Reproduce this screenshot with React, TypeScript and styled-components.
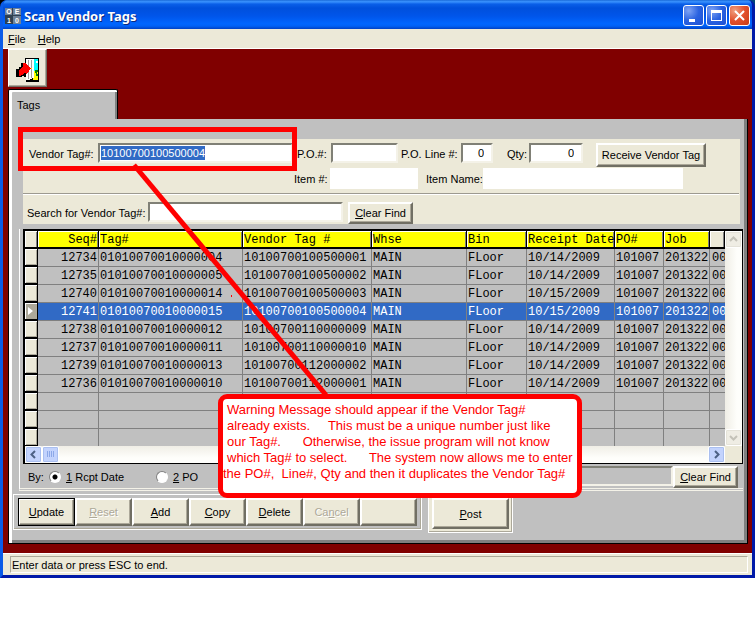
import React from "react";
import styled, { createGlobalStyle, css } from "styled-components";

const GlobalStyle = createGlobalStyle`
  * { box-sizing: border-box; }
  body { margin: 0; background: #fff; }
  button, input { font: inherit; color: inherit; margin: 0; border-radius: 0; }
`;

const beige = "#ece9d8";
const silver = "#c0c0c0";
const maroon = "#800000";

const raised = css`
  border: 2px solid;
  border-color: #fff #716f64 #716f64 #fff;
  box-shadow: inset -1px -1px 0 #aca899;
`;
const sunken = css`
  border: 2px solid;
  border-color: #808076 #f4f2e8 #f4f2e8 #808076;
`;

const Desktop = styled.div`
  position: relative;
  font: 11px/16px "Liberation Sans", Arial, sans-serif;
  color: #000;
  white-space: nowrap;
  overflow: hidden;
  background: linear-gradient(90deg, #000 50%, #00457a 50%) top / 100% 12px no-repeat;
`;

const Window = styled.main`
  display: flex;
  flex-direction: column;
  border: 3px solid;
  border-color: #0a5be8 #0019a8 #0019a8 #0a5be8;
  border-top: 0;
  border-radius: 7px 7px 0 0;
  overflow: hidden;
  background: #0a5be8;
`;

const TitleBar = styled.header`
  display: flex;
  align-items: center;
  gap: 2px;
  height: 29px;
  padding: 2px 2px 0;
  background: linear-gradient(#1b6bd8 0, #3a93ff 6%, #0a5fe8 14%, #0050dc 28%, #0055ea 55%, #0066ff 82%, #0061f5 90%, #0041c4 100%);
`;

const Title = styled.h1`
  flex: 1;
  margin: 0 0 0 1px;
  font: bold 13px/20px "Noto Sans", sans-serif;
  color: #fff;
  text-shadow: 1px 1px 0 #0a2a80;
`;

const CaptionButton = styled.button<{ $close?: boolean }>`
  width: 21px;
  height: 21px;
  padding: 0;
  border: 1px solid #fff;
  border-radius: 3px;
  background: ${(p) =>
    p.$close
      ? "radial-gradient(circle at 25% 25%, #f0a080, #e2502c 50%, #c83c14)"
      : "radial-gradient(circle at 25% 25%, #7fa4f4, #2a62e0 50%, #1c50d4)"};
  svg { display: block; }
`;

const MenuBar = styled.nav`
  display: flex;
  gap: 12px;
  height: 20px;
  padding: 0 5px;
  background: ${beige};
  border-bottom: 1px solid #fff;
`;

const MenuButton = styled.button`
  padding: 0;
  border: 0;
  background: none;
`;

const Client = styled.section`
  padding: 0 4px 9px 5px;
  background: ${maroon};
`;

const ToolButton = styled.button`
  ${raised}
  display: block;
  width: 39px;
  height: 38px;
  margin-bottom: 2px;
  padding: 4px 0 0 6px;
  border-width: 1px;
  background: ${beige};
  svg { display: block; }
`;

const Tab = styled.button`
  display: block;
  width: 110px;
  height: 30px;
  padding: 0 0 0 8px;
  text-align: left;
  border: 0;
  border-top: 1px solid #000;
  border-left: 1px solid #000;
  border-right: 1px solid #000;
  border-radius: 2px 2px 0 0;
  background: ${silver};
  box-shadow: inset 3px 2px 0 #fff, inset -2px 0 0 #808080;
`;

const Panel = styled.div`
  padding: 20px 4px 10px 3px;
  border-left: 1px solid #000;
  border-right: 1px solid #000;
  border-bottom: 1px solid #000;
  background: ${silver};
  box-shadow: inset 3px 0 0 #fff, inset -3px -3px 0 #808080;
`;

const Form = styled.form`
  margin: 0 3px 5px 11px;
  background: ${beige};
`;

const FormRow = styled.div<{ $top: number; $left: number; $height: number }>`
  display: flex;
  align-items: flex-start;
  height: ${(p) => p.$height}px;
  padding: ${(p) => p.$top}px 0 0 ${(p) => p.$left}px;
`;

const Divider = styled.hr`
  height: 2px;
  margin: 0 1px 0 0;
  border: 0;
  border-top: 1px solid #9d9a90;
  border-bottom: 1px solid #fff;
`;

const FieldLabel = styled.label<{ $width: number }>`
  width: ${(p) => p.$width}px;
  line-height: 22px;
`;

const TextBox = styled.input<{ $width: number; $flat?: boolean }>`
  ${sunken}
  width: ${(p) => p.$width}px;
  height: 20px;
  padding: 0 1px;
  background: #fff;
  ${(p) => p.$flat && css`border: 0; height: 21px;`}
  &[inputmode="numeric"] { text-align: right; padding-right: 7px; }
`;

const Selected = styled.div`
  ${sunken}
  width: 195px;
  height: 20px;
  background: #fff;
  input {
    display: block;
    width: 104px;
    height: 14px;
    margin: 1px;
    padding: 0;
    border: 0;
    outline: 0;
    background: #316ac5;
    color: #fff;
  }
`;

const Gap = styled.span<{ $size: number }>`
  width: ${(p) => p.$size}px;
`;

const PushButton = styled.button<{ $width: number; $height: number; $focus?: boolean }>`
  ${raised}
  width: ${(p) => p.$width}px;
  height: ${(p) => p.$height}px;
  padding: 0;
  background: ${beige};
  ${(p) => p.$focus && css`outline: 1px solid #000; outline-offset: -1px;`}
  &:disabled { color: #aca899; text-shadow: 1px 1px 0 #fff; }
`;

const GridFrame = styled.section`
  margin-left: 7px;
  padding-left: 3px;
  border-left: 1px solid #fff;
  border-bottom: 3px double #f4f2e8;
`;

const GridBox = styled.div`
  display: grid;
  grid-template-columns: minmax(0, 1fr) 17px;
  border: 1px solid #000;
  border-top-width: 2px;
  border-left-width: 2px;
`;

const GridView = styled.div`
  overflow: hidden;
  height: 215px;
`;

const Grid = styled.table`
  width: 100%;
  table-layout: fixed;
  border-collapse: separate;
  border-spacing: 0;
  background: ${silver};
  font: 12px/16px "Liberation Mono", "Courier New", monospace;
`;

const HeadCell = styled.th<{ $right?: boolean; $blank?: boolean }>`
  height: 18px;
  padding: 2px 1px 0;
  overflow: hidden;
  font-weight: normal;
  line-height: 14px;
  text-align: ${(p) => (p.$right ? "right" : "left")};
  background: ${(p) => (p.$blank ? beige : "#ff0")};
  border-right: 1px solid #000;
  border-bottom: 2px solid #000;
  box-shadow: inset 1px 1px 0 #fff, inset -1px 0 0 #808080;
`;

const RowHead = styled.th<{ $current?: boolean }>`
  height: 18px;
  padding: 0 0 0 3px;
  background: ${(p) => (p.$current ? "#aca899" : beige)};
  border-right: 1px solid #000;
  border-bottom: 2px solid #000;
  box-shadow: inset 1px 1px 0 #fff, inset -1px -1px 0 #aca899;
  svg { display: block; }
`;

const Row = styled.tr<{ $current?: boolean }>`
  ${(p) => p.$current && css`background: #316ac5; color: #fff;`}
`;

const Cell = styled.td<{ $right?: boolean }>`
  height: 18px;
  padding: 1px 1px 0;
  overflow: hidden;
  text-align: ${(p) => (p.$right ? "right" : "left")};
  border-right: 1px solid #808080;
  border-bottom: 1px solid #808080;
  &:last-child { padding-left: 2px; border-right: 0; }
`;

const VScroll = styled.div`
  display: flex;
  flex-direction: column;
  justify-content: space-between;
  background: linear-gradient(90deg, #f0eee6, #fefefb 70%);
`;

const HScroll = styled.div`
  display: flex;
  background: linear-gradient(#f0eee6, #fefefb 70%);
`;

const Corner = styled.div`
  background: ${beige};
`;

const ScrollButton = styled.button<{ $off?: boolean }>`
  width: 17px;
  height: 17px;
  padding: 0;
  border: 1px solid #fff;
  border-radius: 2px;
  color: ${(p) => (p.$off ? "#c4c2b8" : "#4d6185")};
  background: ${(p) => (p.$off ? "#efede4" : "#c3d3fd")};
  box-shadow: inset 0 0 0 1px ${(p) => (p.$off ? "#e4e2d8" : "#aabff0")};
  svg { display: block; margin: auto; }
`;

const Spacer = styled.div`
  flex: 1;
`;

const FindBar = styled.div`
  display: flex;
  align-items: flex-start;
  height: 24px;
  padding: 2px 5px 0 5px;
`;

const FindInput = styled.input`
  ${sunken}
  flex: 1;
  min-width: 0;
  height: 20px;
  margin-left: 40px;
  background: ${silver};
`;

const RadioLabel = styled.label<{ $width: number }>`
  display: flex;
  align-items: center;
  gap: 5px;
  width: ${(p) => p.$width}px;
  height: 22px;
  input {
    appearance: none;
    width: 12px;
    height: 12px;
    border: 1px solid;
    border-color: #808080 #fff #fff #808080;
    border-radius: 50%;
    background: #fff;
  }
  input:checked {
    background: radial-gradient(circle, #000 2px, #fff 3px);
  }
`;

const Footer = styled.footer`
  display: flex;
  align-items: flex-start;
  gap: 6px;
  margin-top: 3px;
  padding-left: 1px;
`;

const ButtonGroup = styled.div<{ $beige?: boolean }>`
  display: flex;
  padding: ${(p) => (p.$beige ? "3px" : "3px 4px")};
  border: 1px solid #fff;
  background: ${(p) => (p.$beige ? beige : silver)};
  box-shadow: inset -1px -1px 0 #aca899;
`;

const StatusBar = styled.div`
  height: 22px;
  padding: 2px 4px 1px 7px;
  border-top: 1px solid #fff;
  background: ${beige};
  p {
    margin: 0;
    height: 17px;
    padding-left: 1px;
    border: 1px solid;
    border-color: #aca899 #fff #fff #aca899;
  }
`;

const Highlight = styled.div`
  position: absolute;
  left: 18px;
  top: 127px;
  width: 279px;
  height: 44px;
  border: 5px solid #f00;
  pointer-events: none;
`;

const Pointer = styled.svg`
  position: absolute;
  left: 0;
  top: 0;
  pointer-events: none;
`;

const Note = styled.aside`
  position: absolute;
  left: 218px;
  top: 394px;
  width: 364px;
  height: 104px;
  padding: 3px 0 0 4px;
  border: 5px solid #f00;
  border-radius: 9px;
  background: #fff;
  color: #f00;
  font: 13px/16px "Liberation Sans", Arial, sans-serif;
  p { margin: 0; white-space: pre; }
  p:last-child { margin-left: -4px; }
`;

const columns = [
  { name: "Seq#", width: 61, right: true },
  { name: "Tag#", width: 144 },
  { name: "Vendor Tag #", width: 129 },
  { name: "Whse", width: 95 },
  { name: "Bin", width: 60 },
  { name: "Receipt Date", width: 88 },
  { name: "PO#", width: 49 },
  { name: "Job", width: 46 },
];

const rows = [
  ["12734", "01010070010000004", "10100700100500001", "10/14/2009"],
  ["12735", "01010070010000005", "10100700100500002", "10/14/2009"],
  ["12740", "01010070010000014", "10100700100500003", "10/15/2009"],
  ["12741", "01010070010000015", "10100700100500004", "10/15/2009"],
  ["12738", "01010070010000012", "10100700110000009", "10/14/2009"],
  ["12737", "01010070010000011", "10100700110000010", "10/14/2009"],
  ["12739", "01010070010000013", "10100700112000002", "10/14/2009"],
  ["12736", "01010070010000010", "10100700112000001", "10/14/2009"],
].map(([seq, tag, vendor, date]) => [seq, tag, vendor, "MAIN", "FLoor", date, "101007", "201322", "00"]);

const blankRows = [0, 1, 2].map(() => Array(9).fill("") as string[]);
const currentSeq = "12741";

const AppIcon = () => (
  <svg width="16" height="16" viewBox="0 0 16 16" aria-hidden="true">
    <path fill="#2f4050" d="M0 0h16v16H0z" />
    <path fill="#6f8298" d="M0 0h7v7H0zM8 0h8v7H8zM8 8h8v8H8z" />
    <g fill="#fff" fontFamily="Liberation Sans" fontWeight="bold" fontSize="7" textAnchor="middle">
      <text x="4" y="6">O</text>
      <text x="12" y="6">E</text>
      <text x="4" y="15">1</text>
      <text x="12" y="15">0</text>
    </g>
  </svg>
);

const DoorIcon = () => (
  <svg width="26" height="26" viewBox="0 0 26 26" shapeRendering="crispEdges" aria-hidden="true">
    <path fill="#000" d="M10 1h14v24H11v-5H9v-1H7v1H1v-8h3v-2h2V6h4z" />
    <path fill="#0ff" d="M18 2h5v12h-5z" />
    <path fill="#fff" d="M21 4h2v2h-2z" />
    <path fill="#ff0" d="M18 14h5v9h-5z" />
    <path fill="#008000" d="M20 13h3v2h-1v2h1v2h-2v-3h-1z" />
    <path fill="#fff" d="M11 2h8v19h-2v1h-2v1h-4z" />
    <path stroke="#a0a0a0" d="M13.500 3v19M16.500 3v18" />
    <path fill="#f00" d="M8 6h2l6 5-2 3-2 3h-1l-1-2-3 3-3 1v-6l3-3 1-1z" />
    <path fill="#ff0" d="M16 11h1v1h-1z" />
  </svg>
);

const Chevron = ({ d }: { d: string }) => (
  <svg width="9" height="9" viewBox="0 0 9 9" fill="none" stroke="currentColor" strokeWidth="2" aria-hidden="true">
    <path d={d} />
  </svg>
);

export default function App() {
  return (
    <Desktop>
      <GlobalStyle />
      <Window>
        <TitleBar>
          <AppIcon />
          <Title>Scan Vendor Tags</Title>
          {[
            ["Minimize", "M5 13h6v3H5z"],
            ["Maximize", "M4 4h11v11H4zM5 7v7h9V7z"],
          ].map(([name, d]) => (
            <CaptionButton key={name} aria-label={name}>
              <svg width="19" height="19" viewBox="0 0 19 19" shapeRendering="crispEdges">
                <path fill="#fff" fillRule="evenodd" d={d} />
              </svg>
            </CaptionButton>
          ))}
          <CaptionButton $close aria-label="Close">
            <svg width="19" height="19" viewBox="0 0 19 19" stroke="#fff" strokeWidth="2">
              <path d="M5 5l9 9M14 5l-9 9" />
            </svg>
          </CaptionButton>
        </TitleBar>
        <MenuBar>
          <MenuButton><u>F</u>ile</MenuButton>
          <MenuButton><u>H</u>elp</MenuButton>
        </MenuBar>
        <Client>
          <ToolButton aria-label="Exit"><DoorIcon /></ToolButton>
          <Tab>Tags</Tab>
          <Panel>
            <Form onSubmit={(e) => e.preventDefault()}>
              <FormRow $top={4} $left={6} $height={29}>
                <FieldLabel $width={69} htmlFor="vendor">Vendor Tag#:</FieldLabel>
                <Selected><input id="vendor" defaultValue="10100700100500004" /></Selected>
                <Gap $size={4} />
                <FieldLabel $width={34} htmlFor="po">P.O.#:</FieldLabel>
                <TextBox id="po" $width={67} />
                <Gap $size={3} />
                <FieldLabel $width={60} htmlFor="line">P.O. Line #:</FieldLabel>
                <TextBox id="line" $width={32} inputMode="numeric" defaultValue="0" />
                <Gap $size={14} />
                <FieldLabel $width={22} htmlFor="qty">Qty:</FieldLabel>
                <TextBox id="qty" $width={54} inputMode="numeric" defaultValue="0" />
                <Gap $size={13} />
                <PushButton $width={110} $height={24}>Receive Vendor Tag</PushButton>
              </FormRow>
              <FormRow $top={0} $left={271} $height={25}>
                <FieldLabel $width={36} htmlFor="item">Item #:</FieldLabel>
                <TextBox id="item" $width={88} $flat />
                <Gap $size={8} />
                <FieldLabel $width={57} htmlFor="itemName">Item Name:</FieldLabel>
                <TextBox id="itemName" $width={200} $flat />
              </FormRow>
              <Divider />
              <FormRow $top={7} $left={4} $height={29}>
                <FieldLabel $width={121} htmlFor="search">Search for Vendor Tag#:</FieldLabel>
                <TextBox id="search" $width={195} />
                <Gap $size={5} />
                <PushButton $width={65} $height={22}><u>C</u>lear Find</PushButton>
              </FormRow>
            </Form>
            <GridFrame>
              <GridBox>
                <GridView>
                  <Grid>
                    <colgroup>
                      <col width={13} />
                      {columns.map((c) => <col key={c.name} width={c.width} />)}
                      <col />
                    </colgroup>
                    <thead>
                      <tr>
                        <HeadCell $blank />
                        {columns.map((c) => <HeadCell key={c.name} $right={c.right}>{c.name}</HeadCell>)}
                        <HeadCell $blank />
                      </tr>
                    </thead>
                    <tbody>
                      {[...rows, ...blankRows].map((row, i) => {
                        const current = row[0] === currentSeq;
                        return (
                          <Row key={i} $current={current}>
                            <RowHead $current={current}>
                              {current && (
                                <svg width="5" height="8" viewBox="0 0 5 8" aria-hidden="true">
                                  <path fill="#fff" d="M0 0l5 4-5 4z" />
                                </svg>
                              )}
                            </RowHead>
                            {row.map((value, j) => <Cell key={j} $right={j === 0}>{value}</Cell>)}
                          </Row>
                        );
                      })}
                    </tbody>
                  </Grid>
                </GridView>
                <VScroll>
                  <ScrollButton $off aria-label="Scroll up"><Chevron d="M1 6l3.500-3.500L8 6" /></ScrollButton>
                  <ScrollButton $off aria-label="Scroll down"><Chevron d="M1 3l3.500 3.500L8 3" /></ScrollButton>
                </VScroll>
                <HScroll>
                  <ScrollButton aria-label="Scroll left"><Chevron d="M6 1L2.500 4.500 6 8" /></ScrollButton>
                  <ScrollButton aria-label="Scroll thumb">
                    <svg width="9" height="9" viewBox="0 0 9 9" stroke="#8ca8e8" aria-hidden="true">
                      <path d="M1.500 1v6M3.500 1v6M5.500 1v6M7.500 1v6" />
                    </svg>
                  </ScrollButton>
                  <Spacer />
                  <ScrollButton aria-label="Scroll right"><Chevron d="M3 1l3.500 3.500L3 8" /></ScrollButton>
                </HScroll>
                <Corner />
              </GridBox>
              <FindBar>
                <FieldLabel as="span" $width={21}>By:</FieldLabel>
                <RadioLabel $width={107}>
                  <input type="radio" name="by" defaultChecked />
                  <span><u>1</u> Rcpt Date</span>
                </RadioLabel>
                <RadioLabel $width={50}>
                  <input type="radio" name="by" />
                  <span><u>2</u> PO</span>
                </RadioLabel>
                <FindInput aria-label="Find" />
                <PushButton $width={65} $height={22}><u>C</u>lear Find</PushButton>
              </FindBar>
            </GridFrame>
            <Footer>
              <ButtonGroup>
                <PushButton $width={57} $height={28} $focus><u>U</u>pdate</PushButton>
                <PushButton $width={57} $height={28} disabled><u>R</u>eset</PushButton>
                <PushButton $width={57} $height={28}><u>A</u>dd</PushButton>
                <PushButton $width={57} $height={28}><u>C</u>opy</PushButton>
                <PushButton $width={57} $height={28}><u>D</u>elete</PushButton>
                <PushButton $width={57} $height={28} disabled>Ca<u>n</u>cel</PushButton>
                <PushButton $width={57} $height={28} aria-label="Unassigned" />
              </ButtonGroup>
              <ButtonGroup $beige>
                <PushButton $width={77} $height={31}><u>P</u>ost</PushButton>
              </ButtonGroup>
            </Footer>
          </Panel>
        </Client>
        <StatusBar><p>Enter data or press ESC to end.</p></StatusBar>
      </Window>
      <Highlight />
      <Pointer width="340" height="400" viewBox="0 0 340 400" aria-hidden="true">
        <path d="M134 165L326 395" stroke="#f00" strokeWidth="5" />
        <path d="M231 295h1v2h-1z" fill="#f00" />
      </Pointer>
      <Note>
        <p>Warning Message should appear if the Vendor Tag#</p>
        <p>already exists.     This must be a unique number just like</p>
        <p>our Tag#.      Otherwise, the issue program will not know</p>
        <p>which Tag# to select.      The system now allows me to enter</p>
        <p>the PO#,  Line#, Qty and then it duplicates the Vendor Tag#</p>
      </Note>
    </Desktop>
  );
}
